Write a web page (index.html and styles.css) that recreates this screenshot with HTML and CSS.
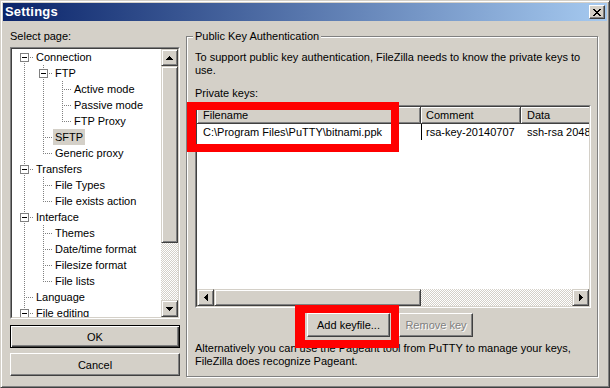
FILE: index.html
```html
<!DOCTYPE html>
<html>
<head>
<meta charset="utf-8">
<title>Settings</title>
<link rel="stylesheet" href="styles.css">
</head>
<body>
<div class="window">
  <div class="titlebar">
    <span class="title">Settings</span>
    <span class="close"><svg width="8" height="7" viewBox="0 0 8 7" shape-rendering="crispEdges"><path d="M0 0h2v1H0zM6 0h2v1H6zM1 1h2v1H1zM5 1h2v1H5zM2 2h4v1H2zM3 3h2v1H3zM2 4h4v1H2zM1 5h2v1H1zM5 5h2v1H5zM0 6h2v1H0zM6 6h2v1H6z"/></svg></span>
  </div>
  <div class="body">
    <div class="left">
      <div class="label">Select page:</div>
      <div class="tree">
        <div class="tree-inner">
          <div class="items">
            <div class="row"><span class="c f"><svg class="box" width="9" height="9" viewBox="0 0 9 9" shape-rendering="crispEdges"><path d="M0.5 0.5h8v8h-8z" fill="#fff" stroke="#808080"/><path d="M2 4h5v1H2z"/></svg></span><span class="lbl">Connection</span></div>
            <div class="row"><span class="c v"></span><span class="c t"><svg class="box" width="9" height="9" viewBox="0 0 9 9" shape-rendering="crispEdges"><path d="M0.5 0.5h8v8h-8z" fill="#fff" stroke="#808080"/><path d="M2 4h5v1H2z"/></svg></span><span class="lbl">FTP</span></div>
            <div class="row"><span class="c v"></span><span class="c v"></span><span class="c t"></span><span class="lbl">Active mode</span></div>
            <div class="row"><span class="c v"></span><span class="c v"></span><span class="c t"></span><span class="lbl">Passive mode</span></div>
            <div class="row"><span class="c v"></span><span class="c v"></span><span class="c l"></span><span class="lbl">FTP Proxy</span></div>
            <div class="row"><span class="c v"></span><span class="c t"></span><span class="lbl sel">SFTP</span></div>
            <div class="row"><span class="c v"></span><span class="c l"></span><span class="lbl">Generic proxy</span></div>
            <div class="row"><span class="c t"><svg class="box" width="9" height="9" viewBox="0 0 9 9" shape-rendering="crispEdges"><path d="M0.5 0.5h8v8h-8z" fill="#fff" stroke="#808080"/><path d="M2 4h5v1H2z"/></svg></span><span class="lbl">Transfers</span></div>
            <div class="row"><span class="c v"></span><span class="c t"></span><span class="lbl">File Types</span></div>
            <div class="row"><span class="c v"></span><span class="c l"></span><span class="lbl">File exists action</span></div>
            <div class="row"><span class="c t"><svg class="box" width="9" height="9" viewBox="0 0 9 9" shape-rendering="crispEdges"><path d="M0.5 0.5h8v8h-8z" fill="#fff" stroke="#808080"/><path d="M2 4h5v1H2z"/></svg></span><span class="lbl">Interface</span></div>
            <div class="row"><span class="c v"></span><span class="c t"></span><span class="lbl">Themes</span></div>
            <div class="row"><span class="c v"></span><span class="c t"></span><span class="lbl">Date/time format</span></div>
            <div class="row"><span class="c v"></span><span class="c t"></span><span class="lbl">Filesize format</span></div>
            <div class="row"><span class="c v"></span><span class="c l"></span><span class="lbl">File lists</span></div>
            <div class="row"><span class="c t"></span><span class="lbl">Language</span></div>
            <div class="row"><span class="c t"><svg class="box" width="9" height="9" viewBox="0 0 9 9" shape-rendering="crispEdges"><path d="M0.5 0.5h8v8h-8z" fill="#fff" stroke="#808080"/><path d="M2 4h5v1H2z"/></svg></span><span class="lbl">File editing</span></div>
          </div>
          <div class="vscroll">
            <div class="sbtn"><svg width="7" height="4" viewBox="0 0 7 4" shape-rendering="crispEdges"><path d="M3 0h1v1h1v1h1v1h1v1H0V3h1V2h1V1h1z"/></svg></div>
            <div class="thumb vthumb"></div>
            <div class="track"></div>
            <div class="sbtn"><svg width="7" height="4" viewBox="0 0 7 4" shape-rendering="crispEdges"><path d="M0 0h7v1H6v1H5v1H4v1H3V3H2V2H1V1H0z"/></svg></div>
          </div>
        </div>
      </div>
      <button class="btn default">OK</button>
      <button class="btn cancel">Cancel</button>
    </div>
    <div class="right">
      <div class="group">
        <div class="legend">Public Key Authentication</div>
        <p class="intro">To support public key authentication, FileZilla needs to know the private keys to<br>use.</p>
        <div class="keys-label">Private keys:</div>
        <div class="list">
          <div class="list-inner">
            <div class="header">
              <div class="hcell k1">Filename</div>
              <div class="hcell k2">Comment</div>
              <div class="hcell k3">Data</div>
            </div>
            <div class="lrow">
              <div class="cell k1">C:\Program Files\PuTTY\bitnami.ppk</div>
              <div class="cell k2 focus">rsa-key-20140707</div>
              <div class="cell k3">ssh-rsa 2048</div>
            </div>
            <div class="hscroll">
              <div class="sbtn"><svg width="4" height="7" viewBox="0 0 4 7" shape-rendering="crispEdges"><path d="M3 0h1v7H3V6H2V5H1V4H0V3h1V2h1V1h1z"/></svg></div>
              <div class="thumb hthumb"></div>
              <div class="track"></div>
              <div class="sbtn"><svg width="4" height="7" viewBox="0 0 4 7" shape-rendering="crispEdges"><path d="M0 0h1v1h1v1h1v1h1v1H3v1H2v1H1v1H0z"/></svg></div>
            </div>
          </div>
        </div>
        <div class="buttons">
          <button class="btn pbtn add">Add keyfile...</button>
          <button class="btn pbtn remove" disabled>Remove key</button>
        </div>
        <p class="alt">Alternatively you can use the Pageant tool from PuTTY to manage your keys,<br>FileZilla does recognize Pageant.</p>
        <div class="mark mark1"></div>
        <div class="mark mark2"></div>
      </div>
    </div>
  </div>
</div>
</body>
</html>
```

FILE: styles.css
```css
* { box-sizing: border-box; }
html, body { margin: 0; padding: 0; }
body {
  width: 610px;
  height: 388px;
  overflow: hidden;
  background: #D4D0C8;
  font-family: "Liberation Sans", Arial, sans-serif;
  font-size: 11px;
  color: #000;
  --dv: repeating-linear-gradient(to bottom, #808080 0 1px, transparent 1px 2px);
  --dh: repeating-linear-gradient(to right, #808080 0 1px, transparent 1px 2px);
}

.window {
  width: 610px;
  height: 388px;
  border: 1px solid;
  border-color: #D4D0C8 #404040 #404040 #D4D0C8;
  box-shadow: inset 1px 1px #fff, inset -1px -1px #808080;
  padding: 2px;
  display: flex;
  flex-direction: column;
  background: #D4D0C8;
}

.titlebar {
  height: 18px;
  flex: none;
  display: flex;
  align-items: center;
  justify-content: space-between;
  padding: 0 2px;
  background: linear-gradient(to right, #0A246A, #A6CAF0);
}
.title {
  color: #fff;
  font-weight: bold;
  font-size: 13px;
  line-height: 18px;
  letter-spacing: 0.2px;
}
.close {
  width: 16px;
  height: 14px;
  background: #D4D0C8;
  border: 1px solid;
  border-color: #fff #404040 #404040 #fff;
  box-shadow: inset -1px -1px #808080;
  display: flex;
  align-items: center;
  justify-content: center;
  padding-right: 1px;
}

.body {
  flex: 1;
  display: flex;
  padding-left: 7px;
}

/* left column */
.left {
  width: 170px;
  flex: none;
  display: flex;
  flex-direction: column;
  padding-top: 9px;
}
.label { line-height: 13px; height: 13px; }

.tree {
  margin-top: 4px;
  height: 272px;
  border: 1px solid;
  border-color: #808080 #fff #fff #808080;
}
.tree-inner {
  height: 100%;
  border: 1px solid;
  border-color: #404040 #D4D0C8 #D4D0C8 #404040;
  background: #fff;
  display: flex;
}
.items {
  flex: 1;
  overflow: hidden;
  padding-left: 3px;
}
.row {
  display: flex;
  height: 16px;
}
.c {
  display: block;
  width: 19px;
  height: 16px;
  flex: none;
}
.c.v { background: var(--dv) 9px 0 / 1px 16px no-repeat; }
.c.t { background: var(--dv) 9px 0 / 1px 16px no-repeat, var(--dh) 11px 8px / 8px 1px no-repeat; }
.c.l { background: var(--dv) 9px 0 / 1px 9px no-repeat, var(--dh) 11px 8px / 8px 1px no-repeat; }
.c.f { background: var(--dv) 9px 8px / 1px 8px no-repeat, var(--dh) 11px 8px / 8px 1px no-repeat; }
.box { display: block; margin: 4px 0 0 5px; }
.lbl {
  padding: 0 2px;
  line-height: 16px;
  white-space: nowrap;
}
.lbl.sel { background: #D4D0C8; }

/* scrollbars */
.vscroll {
  width: 17px;
  flex: none;
  display: flex;
  flex-direction: column;
}
.sbtn, .thumb {
  flex: none;
  background: #D4D0C8;
  border: 1px solid;
  border-color: #D4D0C8 #404040 #404040 #D4D0C8;
  box-shadow: inset 1px 1px #fff, inset -1px -1px #808080;
}
.sbtn {
  width: 17px;
  height: 17px;
  display: flex;
  align-items: center;
  justify-content: center;
}
.vthumb { height: 177px; }
.track {
  flex: 1;
  background: repeating-conic-gradient(#D4D0C8 0 25%, #fff 0 50%) 0 0 / 2px 2px;
}

/* push buttons */
.btn {
  font: inherit;
  color: #000;
  padding: 0;
  width: 170px;
  height: 23px;
  background: #D4D0C8;
  border: 1px solid;
  border-color: #fff #404040 #404040 #fff;
  box-shadow: inset -1px -1px #808080;
  border-radius: 0;
}
.btn.default {
  margin-top: 6px;
  border-color: #000;
  box-shadow: inset 1px 1px #fff, inset -1px -1px #404040, inset -2px -2px #808080;
}
.btn.cancel { margin-top: 5px; }

/* right column */
.right {
  margin-left: 6px;
  padding-top: 15px;
}
.group {
  position: relative;
  width: 412px;
  height: 341px;
  border: 1px solid #808080;
  box-shadow: 1px 1px 0 #fff, inset 1px 1px 0 #fff;
  padding: 0 6px 0 8px;
}
.legend {
  width: max-content;
  margin: -7px 0 0 -2px;
  padding: 0 2px;
  background: #D4D0C8;
  line-height: 13px;
}
.intro {
  margin: 8px 0 0;
  line-height: 13px;
  white-space: nowrap;
}
.keys-label {
  margin-top: 10px;
  line-height: 13px;
}
.list {
  margin-top: 5px;
  width: 396px;
  height: 203px;
  border: 1px solid;
  border-color: #808080 #fff #fff #808080;
}
.list-inner {
  height: 100%;
  border: 1px solid;
  border-color: #404040 #D4D0C8 #D4D0C8 #404040;
  background: #fff;
  display: flex;
  flex-direction: column;
  overflow: hidden;
}
.header {
  display: flex;
  height: 17px;
  flex: none;
}
.hcell {
  flex: none;
  height: 17px;
  line-height: 16px;
  background: #D4D0C8;
  border-right: 1px solid #404040;
  border-bottom: 1px solid #404040;
  box-shadow: inset 1px 1px #fff, inset -1px -1px #808080;
  padding-left: 6px;
  white-space: nowrap;
  overflow: hidden;
}
.k1 { width: 224px; }
.k2 { width: 100px; padding-left: 5px; }
.k3 { width: 140px; }
.lrow {
  display: flex;
  height: 16px;
  flex: none;
}
.cell {
  flex: none;
  line-height: 16px;
  padding-left: 6px;
  white-space: nowrap;
  overflow: hidden;
}
.cell.focus {
  border-left: 1px solid #000;
  padding-left: 4px;
}
.hscroll {
  margin-top: auto;
  display: flex;
  height: 17px;
  flex: none;
}
.hthumb { width: 207px; height: 17px; }

.buttons {
  margin-top: 5px;
  display: flex;
  gap: 9px;
  padding-left: 112px;
}
.pbtn { height: 24px; }
.add { width: 83px; }
.remove {
  width: 74px;
  color: #808080;
  text-shadow: 1px 1px 0 #fff;
}
.alt {
  margin: 5px 0 0;
  line-height: 13px;
  white-space: nowrap;
}

/* red annotation frames */
.mark {
  position: absolute;
  border: 8px solid #f00;
}
.mark1 {
  left: 0;
  top: 65px;
  width: 212px;
  height: 50px;
  border-left-width: 9px;
}
.mark2 {
  left: 108px;
  top: 268px;
  width: 104px;
  height: 43px;
  border-left-width: 10px;
}
```
